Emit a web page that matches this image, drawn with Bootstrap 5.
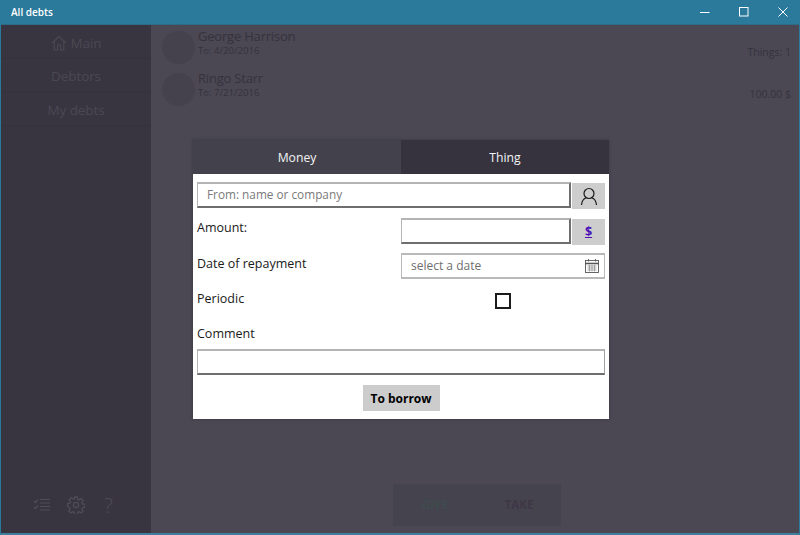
<!DOCTYPE html>
<html lang="en">
<head>
<meta charset="utf-8">
<title>All debts</title>
<link href="https://cdn.jsdelivr.net/npm/bootstrap@5.3.0/dist/css/bootstrap.min.css" rel="stylesheet">
<style>
html,body{height:100%;margin:0;overflow:hidden}
body{font-family:"Open Sans","Noto Sans",sans-serif;background:#4b4853}
.win{width:800px;height:535px;position:relative;border-left:1px solid #2b7a9b;border-right:1px solid #2b7a9b;border-bottom:2px solid #3f7f9c;background:#4b4853;overflow:hidden}
.titlebar{height:25px;background:#2b7a9b;color:#fff;font-size:10px;font-weight:600;padding-left:11px;margin:0 -1px;border-bottom:1px solid #2c6c87}
.wbtn{width:39px;height:25px}
.wbtn-end{width:34px;margin-left:3px}
.body-wrap{height:508px}
.side{width:150px;background:#383540;color:#4b4853}
.side-item{height:33.5px;font-size:13.5px;line-height:1;letter-spacing:-.1px;padding-top:4px}
.side-line{border-bottom:1px solid #35323c}
.side-tools{height:42px;padding:0 0 0 32px;margin-bottom:7px;gap:16px;color:#4f4c58}
.mainp{color:#35323e;padding:4px 8px 0 11px}
.person{height:42px}
.avatar{width:33px;height:33px;border-radius:50%;background:#45424d;flex:none;margin:2px 3px 0 0}
.pname{font-size:13px;line-height:15px;letter-spacing:-.2px}
.pdate{font-size:9.6px;line-height:14px}
.pval{font-size:10.5px;padding-top:16px}
.bottom-bar{width:168px;height:42px;background:#45434e;margin:0 0 7px 231px;font-weight:700;font-size:11.5px}
.bgive{color:#3f4c4d}.btake{color:#3e3747}
.dialog{position:absolute;left:192px;top:140px;width:416px;height:279px;box-shadow:0 0 3px rgba(40,38,48,.5)}
.tabbar{height:34px}
.tabx{width:50%;color:#f3f3f5;font-size:12.2px;padding-top:2px}
.tabm{background:#43424c}.tabt{background:#36333f}
.pane{background:#fff;height:245px;padding:8px 4px 0 4px;color:#1a1a1a;font-size:12.5px}
.fld{height:26px;background:#fff;border-style:solid;border-width:2px 1px;border-color:#b4b4b4 #a0a0a0 #6e6e6e #b4b4b4;color:#7a7a7a;padding:0 0 0 9px;font-size:11.8px}
.fld-join{border-right:2px solid #6e6e6e}
.addon{width:33px;height:26px;background:#cdcdcd;margin-left:1px;margin-top:1px;flex:none}
.dollar{color:#4b12b8;font-weight:700;font-size:12.5px;text-decoration:underline}
.rowx{height:26px}
.half{width:204px;flex:none}
.lbl{line-height:18px}
.lbl-a{padding-top:1px}
.lbl-b{padding-top:2px}
.dfield{height:26px;border-style:solid;border-width:2px 1px;border-color:#b9b9b9;color:#6e6e6e;padding:0 5px 0 9px;font-size:12px}
.chk{width:16px;height:16px;border:2px solid #1c1c1c}
.gobtn{background:#cccccc;color:#000;font-weight:700;font-size:12px;width:77px;height:26px;border:0;padding:2px 0 0;border-radius:0}
.qmark{font-size:21px;line-height:1;font-weight:300;margin-left:3px}
</style>
</head>
<body>
<div class="win d-flex flex-column">
  <div class="titlebar d-flex align-items-center justify-content-between">
    <span>All debts</span>
    <div class="d-flex">
      <div class="wbtn d-flex align-items-center justify-content-center"><svg width="10" height="10" viewBox="0 0 10 10"><path d="M0 5.5h9.5" stroke="#fff" stroke-width="1"/></svg></div>
      <div class="wbtn d-flex align-items-center justify-content-center"><svg width="10" height="10" viewBox="0 0 10 10"><rect x=".5" y=".5" width="8.5" height="8.5" fill="none" stroke="#fff"/></svg></div>
      <div class="wbtn wbtn-end d-flex align-items-center justify-content-center"><svg width="10" height="10" viewBox="0 0 10 10"><path d="M.5.5l9 9M9.5.5l-9 9" stroke="#fff" stroke-width="1" fill="none"/></svg></div>
    </div>
  </div>
  <div class="body-wrap d-flex">
    <aside class="side d-flex flex-column">
      <div class="side-item side-line d-flex align-items-center justify-content-center gap-1">
        <svg width="16" height="16" viewBox="0 0 16 16" fill="none" stroke="#4b4853" stroke-width="1.1"><path d="M1 8l7-6.5L15 8M3.2 6.5V15h3.3v-5h3v5h3.3V6.5"/></svg><span>Main</span>
      </div>
      <div class="side-item side-line d-flex align-items-center justify-content-center">Debtors</div>
      <div class="side-item side-line d-flex align-items-center justify-content-center">My debts</div>
      <div class="side-tools d-flex align-items-center mt-auto">
        <svg width="18" height="16" viewBox="0 0 18 16" fill="none" stroke="#4f4c58" stroke-width="1.2"><path d="M1 4l1.5 1.5L5 2.5M1 10l1.5 1.5L5 8.5M7 2.5h10M7 6h10M7 9.5h10M7 13h10"/></svg>
        <svg width="18" height="18" viewBox="0 0 18 18" fill="none" stroke="#4f4c58" stroke-width="1.3"><circle cx="9" cy="9" r="2.6"/><path d="M7.6 1h2.8l.4 2.3 1.5.6 1.9-1.3 2 2-1.3 1.9.6 1.5 2.3.4v2.8l-2.3.4-.6 1.5 1.3 1.9-2 2-1.9-1.3-1.5.6-.4 2.3H7.6l-.4-2.3-1.5-.6-1.9 1.3-2-2 1.3-1.9-.6-1.5L.6 10.4V7.6l2.3-.4.6-1.5-1.3-1.9 2-2 1.9 1.3 1.5-.6z"/></svg>
        <span class="qmark">?</span>
      </div>
    </aside>
    <main class="mainp flex-grow-1 d-flex flex-column">
      <div class="person d-flex">
        <div class="avatar"></div>
        <div class="flex-grow-1"><div class="pname">George Harrison</div><div class="pdate">To: 4/20/2016</div></div>
        <div class="pval">Things: 1</div>
      </div>
      <div class="person d-flex">
        <div class="avatar"></div>
        <div class="flex-grow-1"><div class="pname">Ringo Starr</div><div class="pdate">To: 7/21/2016</div></div>
        <div class="pval">100.00 $</div>
      </div>
      <div class="bottom-bar d-flex mt-auto">
        <div class="w-50 d-flex align-items-center justify-content-center bgive">GIVE</div>
        <div class="w-50 d-flex align-items-center justify-content-center btake">TAKE</div>
      </div>
    </main>
  </div>
  <section class="dialog">
    <div class="tabbar d-flex">
      <div class="tabx tabm d-flex align-items-center justify-content-center">Money</div>
      <div class="tabx tabt d-flex align-items-center justify-content-center">Thing</div>
    </div>
    <div class="pane">
      <div class="d-flex rowx">
        <div class="fld fld-join flex-grow-1 d-flex align-items-center">From: name or company</div>
        <div class="addon d-flex align-items-center justify-content-center">
          <svg width="18" height="19" viewBox="0 0 18 19" fill="none" stroke="#1a1a1a" stroke-width="1.2"><circle cx="9" cy="6.5" r="5"/><path d="M1.5 18c.4-4 2.7-6.5 4.7-7.2M16.5 18c-.4-4-2.7-6.5-4.7-7.2"/></svg>
        </div>
      </div>
      <div class="d-flex justify-content-between rowx" style="margin-top:10px">
        <div class="lbl lbl-a">Amount:</div>
        <div class="half d-flex">
          <div class="fld fld-join flex-grow-1"></div>
          <div class="addon d-flex align-items-center justify-content-center"><span class="dollar">$</span></div>
        </div>
      </div>
      <div class="d-flex justify-content-between rowx" style="margin-top:9px">
        <div class="lbl lbl-b">Date of repayment</div>
        <div class="half dfield d-flex align-items-center justify-content-between">
          <span>select a date</span>
          <svg width="14" height="14" viewBox="0 0 14 14" fill="none" stroke="#555" stroke-width=".9"><rect x=".5" y="1.5" width="13" height="12"/><path d="M.5 4.5h13" stroke-width="1.6"/><path d="M3.5 0v2.5M10.5 0v2.5"/><path d="M2.5 7h9M2.5 9h9M2.5 11h9M4.5 6v6.5M7 6v6.5M9.5 6v6.5" stroke-width=".7" stroke="#888"/></svg>
        </div>
      </div>
      <div class="d-flex justify-content-between" style="height:28px;margin-top:9px">
        <div class="lbl lbl-b">Periodic</div>
        <div class="half d-flex justify-content-center" style="padding:5px 0 0 0"><div class="chk"></div></div>
      </div>
      <div class="lbl lbl-b" style="margin-top:7px">Comment</div>
      <div class="fld" style="margin-top:6px"></div>
      <div class="d-flex justify-content-center" style="margin-top:10px">
        <button class="btn gobtn">To borrow</button>
      </div>
    </div>
  </section>
</div>
</body>
</html>
